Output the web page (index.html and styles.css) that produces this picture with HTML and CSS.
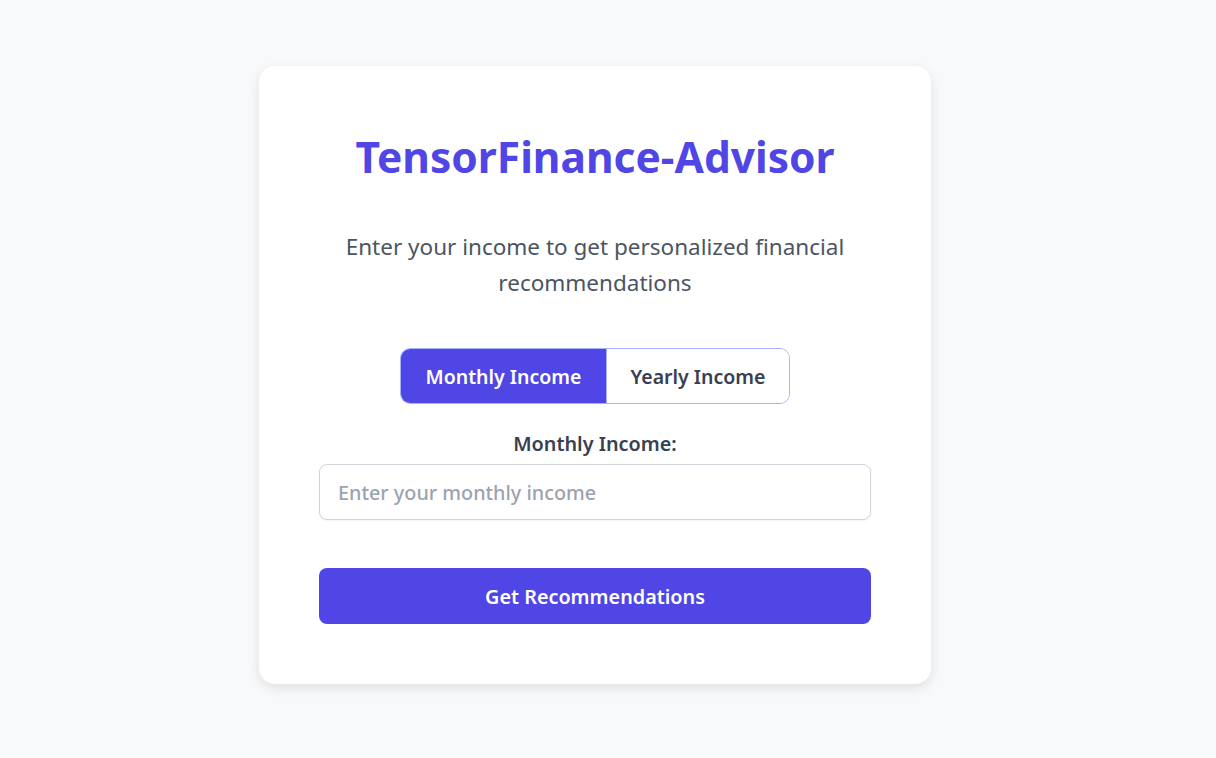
FILE: index.html
```html
<!DOCTYPE html>
<html lang="en">
<head>
<meta charset="utf-8">
<title>TensorFinance-Advisor</title>
<link rel="stylesheet" href="styles.css">
</head>
<body>
<main class="page">
  <section class="card">
    <h1 class="title">TensorFinance-Advisor</h1>
    <p class="subtitle">Enter your income to get personalized financial recommendations</p>
    <div class="toggle">
      <button class="toggle-btn active" type="button">Monthly Income</button>
      <button class="toggle-btn" type="button">Yearly Income</button>
    </div>
    <form class="form">
      <label class="label" for="income">Monthly Income:</label>
      <input class="input" id="income" type="text" placeholder="Enter your monthly income">
      <button class="submit" type="button">Get Recommendations</button>
    </form>
  </section>
</main>
</body>
</html>
```

FILE: styles.css
```css
* { box-sizing: border-box; }
html, body { margin: 0; padding: 0; }
body {
  background: #f8f9fb;
  font-family: "Noto Sans", "Open Sans", sans-serif;
  color: #374151;
}
.page {
  min-height: 758px;
  display: flex;
  align-items: center;
  justify-content: center;
  padding-bottom: 8px;
  padding-right: 26px;
}
.card {
  width: 672px;
  background: #ffffff;
  border-radius: 16px;
  box-shadow: 0 4px 12px rgba(0, 0, 0, 0.1);
  padding: 60px 60px 60px;
  display: flex;
  flex-direction: column;
  align-items: center;
  text-align: center;
}
.title {
  margin: 0;
  font-size: 42.5px;
  line-height: 62px;
  font-weight: 700;
  color: #4f46e5;
}
.subtitle {
  margin: 41px 0 0;
  font-size: 22.5px;
  line-height: 36px;
  color: #4b5563;
  width: 540px;
}
.toggle {
  margin-top: 47px;
  display: flex;
  border: 1px solid #a5b4fc;
  border-radius: 10px;
  overflow: hidden;
}
.toggle-btn {
  font-family: inherit;
  font-size: 19.5px;
  font-weight: 600;
  height: 54px;
  border: none;
  background: #ffffff;
  color: #374151;
  cursor: pointer;
}
.toggle-btn:first-child { width: 206px; border-right: 1px solid #a5b4fc; }
.toggle-btn:last-child { width: 182px; }
.toggle-btn.active { background: #4f46e5; color: #ffffff; }
.form {
  width: 100%;
  display: flex;
  flex-direction: column;
  align-items: stretch;
  margin-top: 26px;
}
.label {
  font-size: 19.8px;
  font-weight: 600;
  line-height: 28px;
  color: #374151;
  margin-bottom: 6px;
}
.input {
  height: 56px;
  border: 1px solid #d1d5db;
  border-radius: 8px;
  padding: 0 18px;
  font-family: inherit;
  font-size: 19.8px;
  font-weight: 500;
  color: #374151;
  box-shadow: 0 1px 2px rgba(0, 0, 0, 0.05);
  outline: none;
}
.input::placeholder { color: #9ca3af; }
.submit {
  margin-top: 48px;
  height: 56px;
  border: none;
  border-radius: 8px;
  background: #4f46e5;
  color: #ffffff;
  font-family: inherit;
  font-size: 19.8px;
  font-weight: 600;
  cursor: pointer;
}
```
